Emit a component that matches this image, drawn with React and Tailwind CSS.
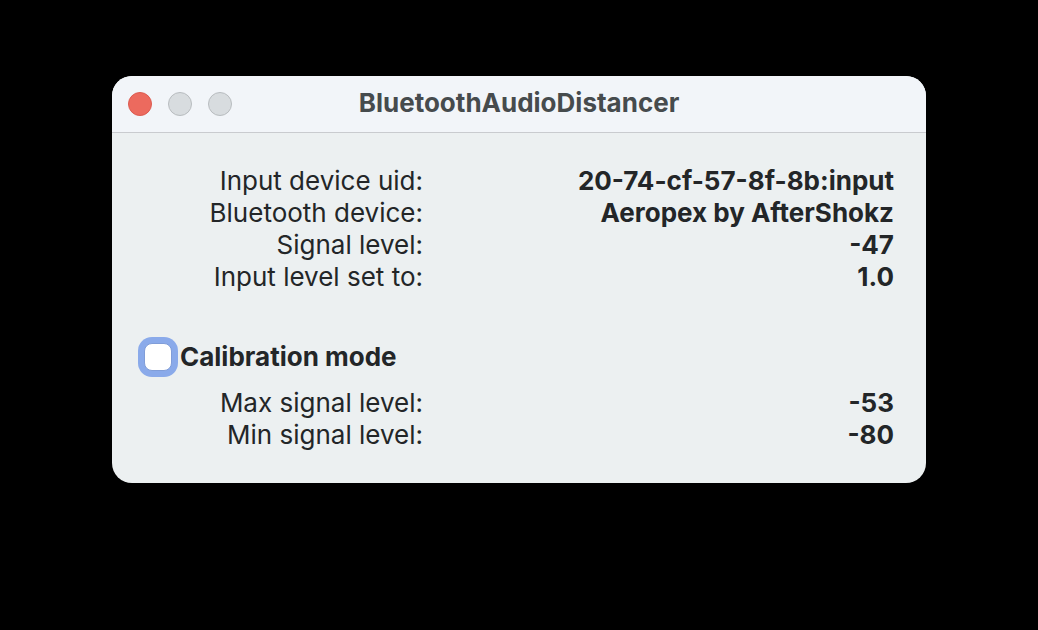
const Row = ({ label, value }) => (
  <div className="flex">
    <dt className="w-[287px] shrink-0 text-right">{label}</dt>
    <dd className="flex-1 text-right font-bold">{value}</dd>
  </div>
);

export default function App() {
  return (
    <div className="min-h-screen bg-black px-28 pt-[76px] font-[Inter,sans-serif] text-[26px] leading-8 text-[#232628]">
      <main className="overflow-hidden rounded-[20px] bg-[#ecf0f1]">
        <header className="grid h-[57px] grid-cols-[120px_1fr_120px] items-center border-b border-[#c9cbcf] bg-[#f2f5f9]">
          <div className="flex gap-4 pl-4">
            <button aria-label="Close" className="size-6 rounded-full border border-[#dc5b50] bg-[#ec6a5e]" />
            <button aria-label="Minimize" className="size-6 rounded-full border border-[#b8bcbf] bg-[#d8dcdf]" />
            <button aria-label="Zoom" className="size-6 rounded-full border border-[#b8bcbf] bg-[#d8dcdf]" />
          </div>
          <h1 className="pb-0.5 text-center font-bold text-[#464b4d]">BluetoothAudioDistancer</h1>
        </header>
        <div className="px-8 py-8">
          <dl className="-ml-2">
            <Row label="Input device uid:" value="20-74-cf-57-8f-8b:input" />
            <Row label="Bluetooth device:" value="Aeropex by AfterShokz" />
            <Row label="Signal level:" value="-47" />
            <Row label="Input level set to:" value="1.0" />
          </dl>
          <label className="mt-12 flex w-fit items-center gap-2 font-bold">
            <input type="checkbox" className="size-7 appearance-none rounded-lg border border-[#809dd8] bg-white ring-[6px] ring-[#8aaaea]" />
            Calibration mode
          </label>
          <dl className="mt-[14px] -ml-2">
            <Row label="Max signal level:" value="-53" />
            <Row label="Min signal level:" value="-80" />
          </dl>
        </div>
      </main>
    </div>
  );
}
